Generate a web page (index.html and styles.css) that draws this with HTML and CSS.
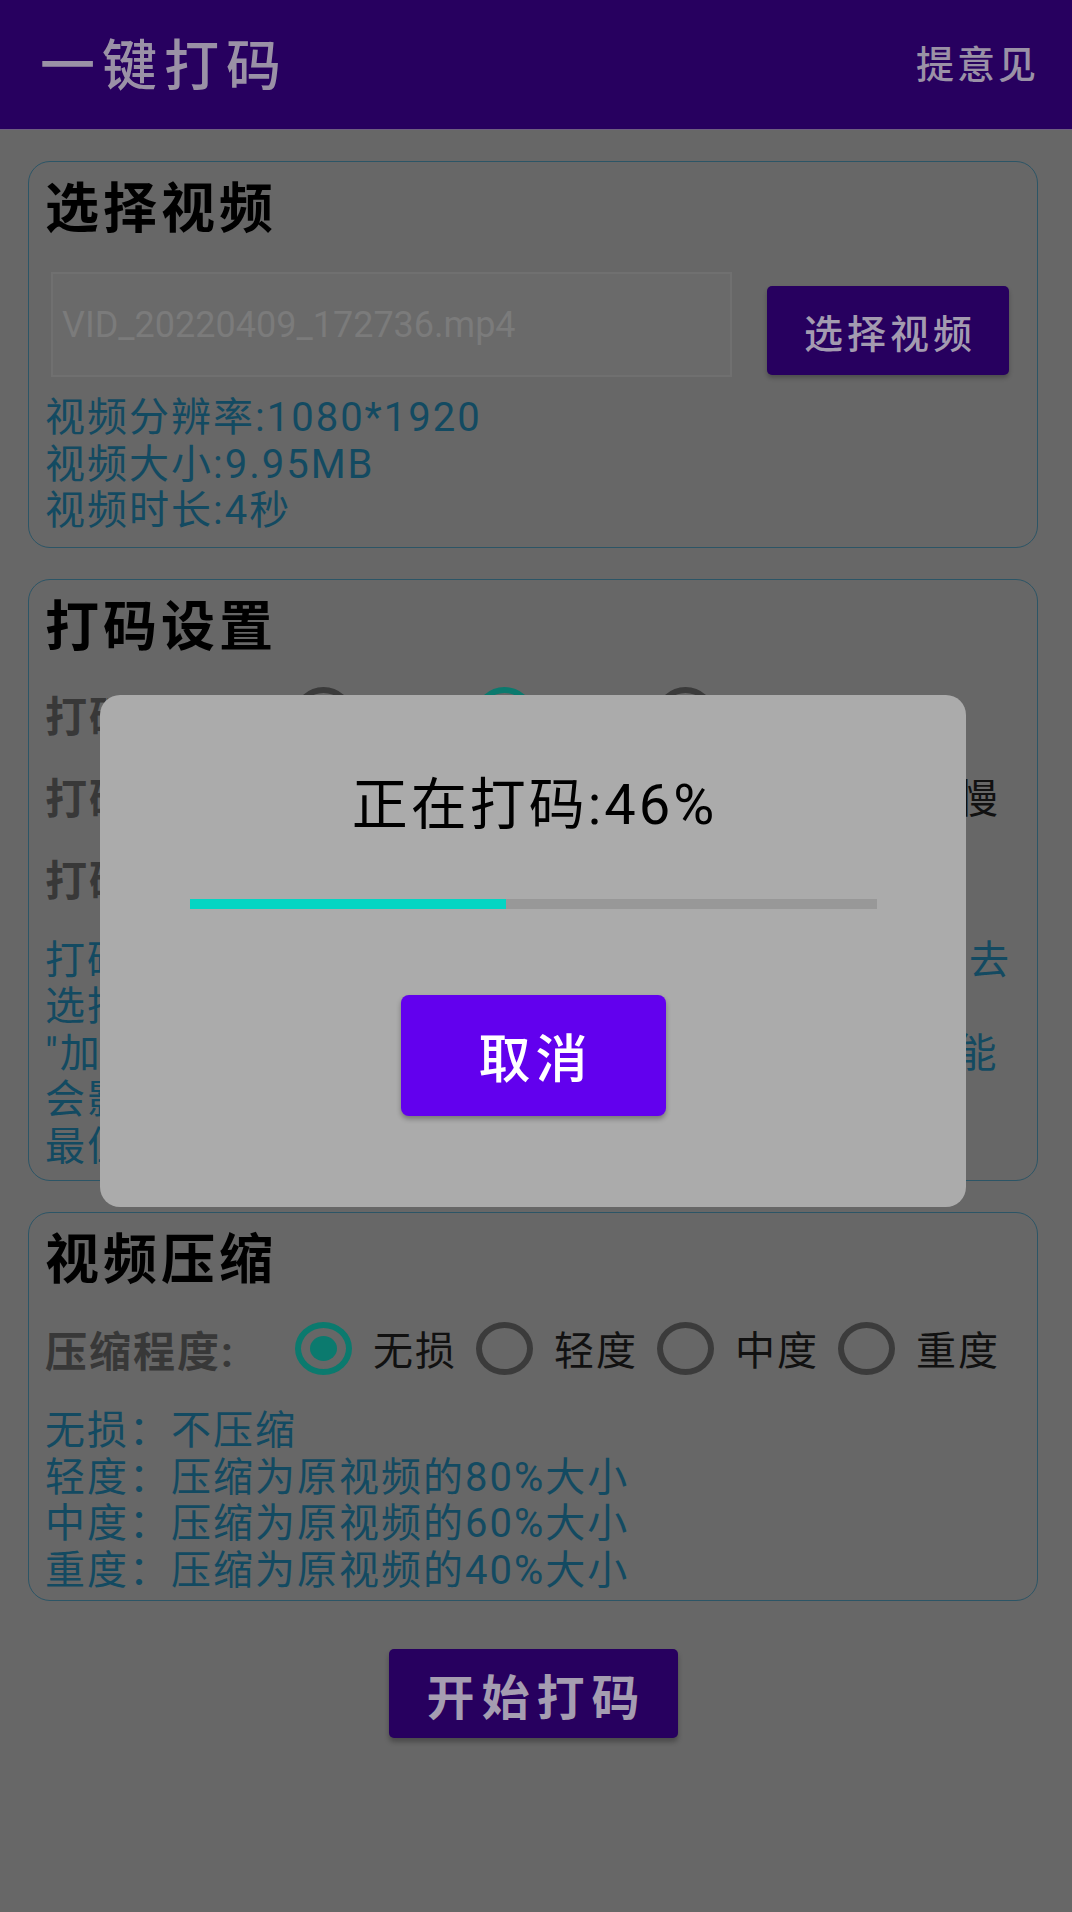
FILE: index.html
```html
<!DOCTYPE html>
<html lang="zh-CN">
<head>
<meta charset="utf-8">
<title>一键打码</title>
<link rel="stylesheet" href="styles.css">
</head>
<body>
<header class="appbar">
  <h1 class="appbar-title">一键打码</h1>
  <span class="appbar-action">提意见</span>
</header>

<main class="content">
  <section class="card card-select">
    <h2 class="card-title">选择视频</h2>
    <div class="pick-row">
      <div class="file-field">VID_20220409_172736.mp4</div>
      <button class="btn btn-pick">选择视频</button>
    </div>
    <div class="info">
      <p>视频分辨率:1080*1920</p>
      <p>视频大小:9.95MB</p>
      <p>视频时长:4秒</p>
    </div>
  </section>

  <section class="card card-settings">
    <h2 class="card-title">打码设置</h2>
    <div class="opt-row">
      <span class="opt-label">打码类型:</span>
      <div class="radio"><span class="radio-dot"></span><span class="radio-text">模糊</span></div>
      <div class="radio"><span class="radio-dot is-checked"></span><span class="radio-text">像素</span></div>
      <div class="radio"><span class="radio-dot"></span><span class="radio-text">色块</span></div>
    </div>
    <div class="opt-row">
      <span class="opt-label">打码速度:</span>
      <div class="radio"><span class="radio-dot"></span><span class="radio-text">极快</span></div>
      <div class="radio"><span class="radio-dot is-checked"></span><span class="radio-text">较快</span></div>
      <div class="radio"><span class="radio-dot"></span><span class="radio-text">标准</span></div>
      <div class="radio"><span class="radio-dot"></span><span class="radio-text">较慢</span></div>
    </div>
    <div class="opt-row">
      <span class="opt-label">打码强度:</span>
      <div class="radio"><span class="radio-dot"></span><span class="radio-text">轻微</span></div>
      <div class="radio"><span class="radio-dot is-checked"></span><span class="radio-text">适中</span></div>
    </div>
    <p class="desc">打码速度越快，打码所用时间越短，可以根据需要去<br>选择合适的打码速度。<br>"加速"打码虽然速度快，但会降低画面质量，也可能<br>会影响打码效果。<br>最佳效果请选择"标准"速度。</p>
  </section>

  <section class="card card-compress">
    <h2 class="card-title">视频压缩</h2>
    <div class="opt-row">
      <span class="opt-label">压缩程度:</span>
      <div class="radio"><span class="radio-dot is-checked"></span><span class="radio-text">无损</span></div>
      <div class="radio"><span class="radio-dot"></span><span class="radio-text">轻度</span></div>
      <div class="radio"><span class="radio-dot"></span><span class="radio-text">中度</span></div>
      <div class="radio"><span class="radio-dot"></span><span class="radio-text">重度</span></div>
    </div>
    <p class="desc">无损：不压缩<br>轻度：压缩为原视频的80%大小<br>中度：压缩为原视频的60%大小<br>重度：压缩为原视频的40%大小</p>
  </section>

  <div class="start-wrap">
    <button class="btn btn-start">开始打码</button>
  </div>
</main>

<div class="overlay">
  <div class="dialog">
    <div class="dialog-text">正在打码:46%</div>
    <div class="progress"><div class="progress-fill" style="width:46%"></div></div>
    <button class="btn btn-cancel">取消</button>
  </div>
</div>
</body>
</html>
```
FILE: styles.css
```css
* { box-sizing: border-box; }

html, body {
  margin: 0;
  padding: 0;
}

body {
  width: 1072px;
  min-height: 1912px;
  background: #676767;
  font-family: Roboto, "Noto Sans CJK SC", sans-serif;
  color: #000;
}

p { margin: 0; }

.appbar {
  height: 130px;
  background: #27005f;
  border-bottom: 1px solid #6d5e80;
  display: flex;
  align-items: center;
  justify-content: space-between;
  padding: 0 33px 6px 40px;
  font-family: "Noto Sans CJK SC", sans-serif;
}

.appbar-title {
  margin: 0;
  font-size: 55px;
  line-height: 1;
  font-weight: 500;
  letter-spacing: 7px;
  color: #9a91a6;
}

.appbar-action {
  font-size: 38px;
  line-height: 1;
  font-weight: 500;
  letter-spacing: 3px;
  color: #9a91a6;
}

.content {
  display: flex;
  flex-direction: column;
  gap: 31px;
  padding: 31px 34px 0 28px;
}

.card {
  border: 1.5px solid #2c5566;
  border-radius: 22px;
  padding: 15px 16px 12px 16px;
}

.card-title {
  margin: 0;
  font-size: 54px;
  line-height: 66px;
  font-weight: 700;
  letter-spacing: 4px;
  color: #000;
}

.pick-row {
  display: flex;
  align-items: flex-start;
  margin-top: 29px;
}

.file-field {
  margin-left: 6px;
  width: 681px;
  height: 105px;
  border: 2px solid #707070;
  background: #6a6a6a;
  color: #7b7b7b;
  font-family: Roboto, sans-serif;
  font-size: 36px;
  display: flex;
  align-items: center;
  padding-left: 9px;
}

.btn {
  border: 0;
  font-family: "Noto Sans CJK SC", sans-serif;
  display: flex;
  align-items: center;
  justify-content: center;
  padding: 0;
}

.btn-pick {
  margin-left: 35px;
  margin-top: 14px;
  width: 242px;
  height: 89px;
  background: #27005f;
  color: #a39bb0;
  font-size: 39px;
  font-weight: 500;
  letter-spacing: 4px;
  padding-left: 4px;
  border-radius: 5px;
  box-shadow: 0 3px 4px rgba(0, 0, 0, 0.25);
}

.info {
  margin-top: 18px;
  color: #134a61;
  font-size: 40px;
  line-height: 46.5px;
  letter-spacing: 2px;
}

.opt-row {
  display: flex;
  align-items: center;
  height: 82px;
}

.card-settings .opt-row:first-of-type { margin-top: 12px; }
.card-compress .opt-row { margin-top: 13px; }

.opt-label {
  flex-shrink: 0;
  width: 250px;
  font-size: 42px;
  font-weight: 700;
  letter-spacing: 2px;
  color: #383838;
}

.radio {
  display: flex;
  align-items: center;
  gap: 21px;
  margin-right: 19px;
}

.radio-dot {
  position: relative;
  width: 57px;
  height: 53px;
  border-radius: 50%;
  border: 6px solid #3b3b3b;
  flex-shrink: 0;
}

.radio-dot.is-checked {
  border-color: #0b7a6e;
}

.radio-dot.is-checked::after {
  content: "";
  position: absolute;
  left: 50%;
  top: 50%;
  width: 27px;
  height: 25px;
  margin: -12.5px 0 0 -13.5px;
  border-radius: 50%;
  background: #0b7a6e;
}

.radio-text {
  font-size: 40px;
  letter-spacing: 2px;
  color: #111;
  white-space: nowrap;
}

.desc {
  color: #134a61;
  font-size: 40px;
  line-height: 46.5px;
  letter-spacing: 2px;
  white-space: nowrap;
}

.card-settings { padding-bottom: 10px; }
.card-settings .desc { margin-top: 19px; }
.card-compress { padding-bottom: 6px; }
.card-compress .desc { margin-top: 19px; }

.start-wrap {
  display: flex;
  justify-content: center;
  margin-top: 17px;
}

.btn-start {
  width: 289px;
  height: 89px;
  background: #27005f;
  color: #a59db1;
  font-size: 48px;
  font-weight: 700;
  letter-spacing: 7px;
  padding-left: 7px;
  border-radius: 5px;
  box-shadow: 0 4px 5px rgba(0, 0, 0, 0.28);
}

.overlay {
  position: fixed;
  inset: 0;
  display: flex;
  align-items: center;
  justify-content: center;
  padding: 0 6px 10px 0;
}

.dialog {
  width: 866px;
  height: 512px;
  background: #ababab;
  border-radius: 20px;
  display: flex;
  flex-direction: column;
  align-items: center;
  padding-top: 79px;
}

.dialog-text {
  font-size: 56px;
  line-height: 62px;
  letter-spacing: 3px;
  padding-left: 3px;
  color: #000;
}

.progress {
  margin-top: 63px;
  width: 687px;
  height: 10px;
  background: #989898;
}

.progress-fill {
  height: 100%;
  background: #04d5c3;
}

.btn-cancel {
  margin-top: 86px;
  width: 265px;
  height: 121px;
  background: #6200ee;
  color: #fff;
  font-size: 52px;
  font-weight: 500;
  letter-spacing: 5px;
  padding-left: 5px;
  border-radius: 8px;
  box-shadow: 0 3px 5px rgba(0, 0, 0, 0.3);
}
```
